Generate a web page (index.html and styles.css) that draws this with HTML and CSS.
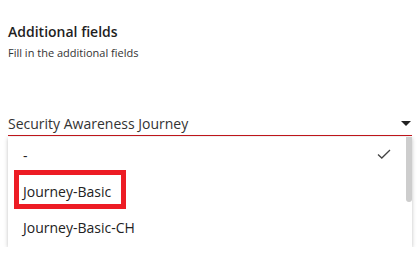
FILE: index.html
```html
<!DOCTYPE html>
<html lang="en">
<head>
    <meta charset="UTF-8">
    <meta name="viewport" content="width=device-width, initial-scale=1.0">
    <title>Additional fields</title>
    <link rel="stylesheet" href="styles.css">
</head>
<body>
<div class="panel">
    <div class="section-head">
        <h2>Additional fields</h2>
        <p>Fill in the additional fields</p>
    </div>

    <div class="select-field">
        <div class="select-value">
            <span>Security Awareness Journey</span>
            <svg class="caret" width="10" height="5" viewBox="0 0 10 5"><path d="M0 0 L10 0 L5 5 Z" fill="#222"/></svg>
        </div>

        <ul class="options">
            <li class="option selected">
                <span>-</span>
                <svg class="check" width="14" height="10" viewBox="0 0 14 10"><path d="M1 5.5 L4.8 9 L13 1" fill="none" stroke="#444" stroke-width="1.3"/></svg>
            </li>
            <li class="option marked"><span>Journey-Basic</span></li>
            <li class="option"><span>Journey-Basic-CH</span></li>
        </ul>
        <div class="scroll-thumb"></div>
    </div>
</div>
</body>
</html>
```

FILE: styles.css
```css
body {
    margin: 0;
    background-color: #fff;
    font-family: "Open Sans", Arial, sans-serif;
    color: #222;
}

.panel {
    padding: 22px 6px 0 8px;
}

.section-head h2 {
    margin: 0;
    font-size: 14px;
    font-weight: 600;
    line-height: 20px;
    color: #1f1f1f;
}

.section-head p {
    margin: 3px 0 0 0;
    font-size: 11px;
    line-height: 16px;
    color: #333;
}

.select-field {
    position: relative;
    margin-top: 50px;
}

.select-value {
    display: flex;
    justify-content: space-between;
    align-items: center;
    height: 24px;
    font-size: 14px;
    color: #333;
    border-bottom: 1px solid #c4161c;
}

.caret {
    margin-right: 1px;
}

.options {
    list-style: none;
    margin: 1px 0 0 0;
    padding: 0;
    background-color: #fff;
    box-shadow: 0 1px 4px rgba(0, 0, 0, 0.25);
    height: 110px;
    overflow: hidden;
}

.option {
    position: relative;
    display: flex;
    justify-content: space-between;
    align-items: center;
    height: 36px;
    padding: 0 21px 0 15px;
    font-size: 14px;
    color: #222;
}

.check {
    margin-top: -2px;
}

/* annotation box around the option */
.option.marked::after {
    content: "";
    position: absolute;
    left: 6px;
    top: -3px;
    width: 102px;
    height: 29px;
    border: 5px solid #ed1c24;
}

.scroll-thumb {
    position: absolute;
    right: 0;
    top: 26px;
    width: 6px;
    height: 65px;
    background-color: #cdcdcd;
    border-radius: 0 0 3px 3px;
}
```
